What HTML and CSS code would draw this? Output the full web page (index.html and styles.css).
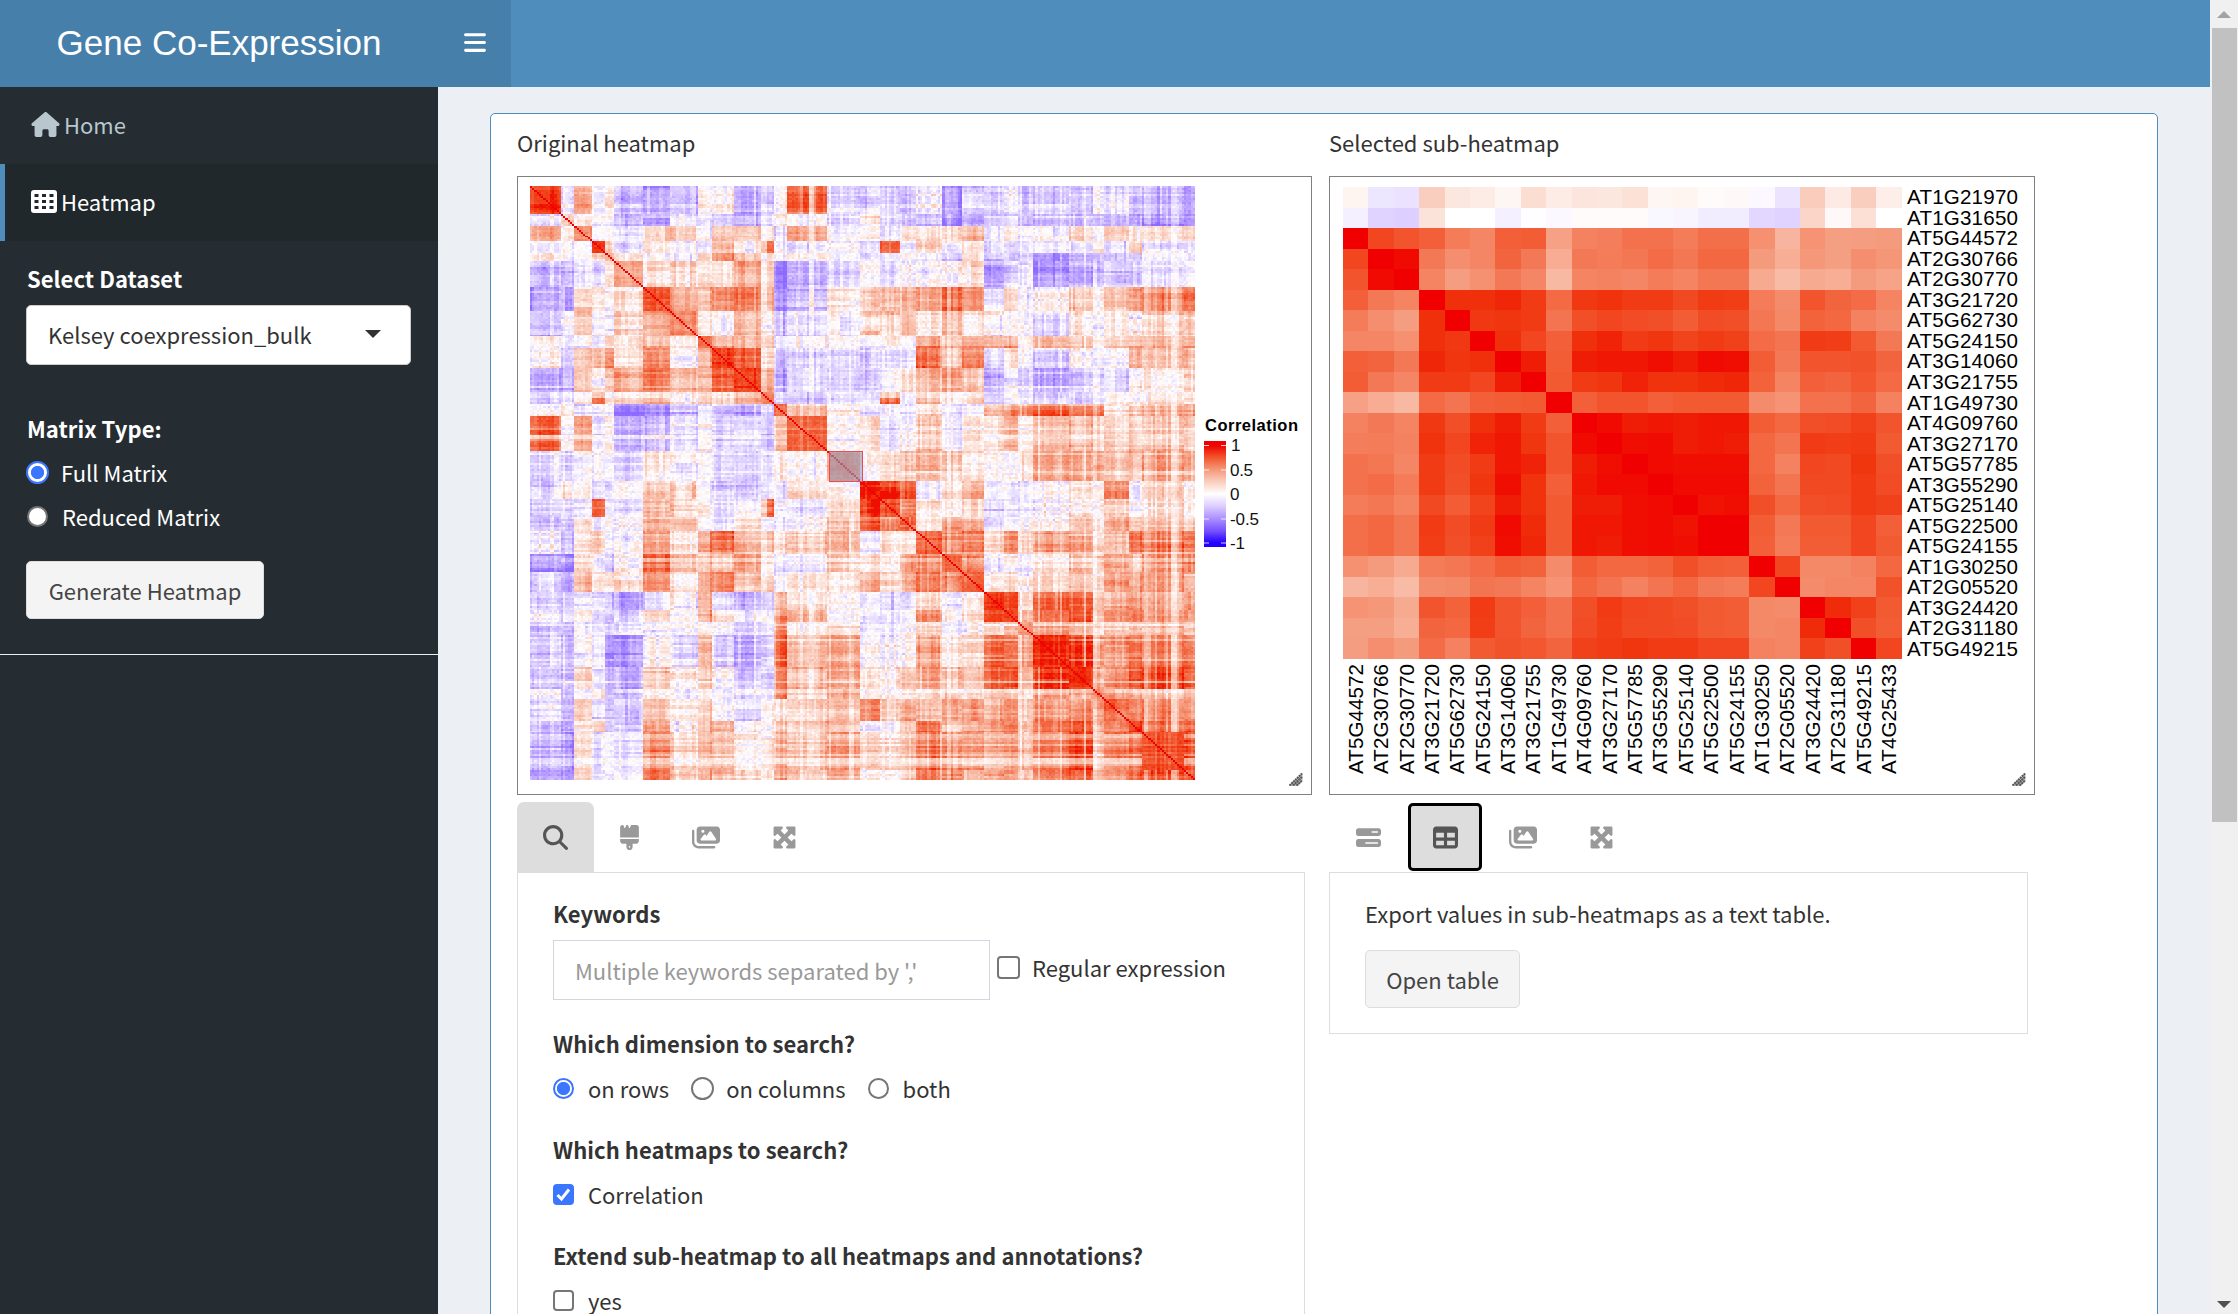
FILE: index.html
```html
<!DOCTYPE html>
<html lang="en">
<head>
<meta charset="utf-8">
<title>Gene Co-Expression</title>
<link rel="stylesheet" href="styles.css">
</head>
<body>
<svg class="sprite" aria-hidden="true">
  <symbol id="i-images" viewBox="0 0 576 512"><path d="M160 32c-35.300 0-64 28.700-64 64V320c0 35.300 28.700 64 64 64H512c35.300 0 64-28.700 64-64V96c0-35.300-28.700-64-64-64H160zM396 138.700l96 144c4.900 7.400 5.400 16.800 1.200 24.600S480.900 320 472 320H328 280 200c-9.200 0-17.600-5.300-21.600-13.600s-2.900-18.200 2.900-25.400l64-80c4.600-5.700 11.400-9 18.700-9s14.200 3.300 18.700 9l17.300 21.600 56-84C360.500 132 368 128 376 128s15.500 4 20 10.700zM192 128a32 32 0 1 1 64 0 32 32 0 1 1 -64 0zM48 120c0-13.300-10.700-24-24-24S0 106.700 0 120V344c0 75.100 60.900 136 136 136H456c13.300 0 24-10.700 24-24s-10.700-24-24-24H136c-48.600 0-88-39.400-88-88V120z"/></symbol>
  <symbol id="i-max" viewBox="0 0 512 512"><path d="M200 32H56C42.700 32 32 42.700 32 56V200c0 9.700 5.800 18.500 14.800 22.200s19.300 1.700 26.200-5.200l40-40 79 79-79 79L73 295c-6.900-6.900-17.200-8.900-26.200-5.200S32 302.300 32 312V456c0 13.300 10.700 24 24 24H200c9.700 0 18.500-5.800 22.200-14.800s1.700-19.300-5.200-26.200l-40-40 79-79 79 79-40 40c-6.900 6.900-8.900 17.200-5.200 26.200s12.500 14.800 22.200 14.800H456c13.300 0 24-10.700 24-24V312c0-9.700-5.800-18.500-14.800-22.200s-19.300-1.700-26.200 5.200l-40 40-79-79 79-79 40 40c6.900 6.900 17.200 8.900 26.200 5.200s14.800-12.500 14.800-22.200V56c0-13.300-10.700-24-24-24H312c-9.700 0-18.500 5.800-22.200 14.800s-1.700 19.300 5.200 26.200l40 40-79 79-79-79 40-40c6.900-6.900 8.900-17.200 5.200-26.200S209.700 32 200 32z"/></symbol>
  <symbol id="i-grip" viewBox="0 0 14 13"><path d="M0 13 13.500 0V8L9 13Z" fill="#b4b4b4"/><path d="M.5 12.500 13 .5M4 12.500 13 4M7.500 12.500 13 7.500" stroke="#555" stroke-width="2" stroke-dasharray="2 .6" fill="none"/></symbol>
</svg>

<div class="app">
  <div class="page">
    <header class="header">
      <div class="brand">Gene Co-Expression</div>
      <button class="toggle" aria-label="Toggle navigation"><svg viewBox="0 0 448 512"><path d="M0 96C0 78.300 14.300 64 32 64H416c17.700 0 32 14.300 32 32s-14.300 32-32 32H32C14.300 128 0 113.700 0 96zM0 256c0-17.700 14.300-32 32-32H416c17.700 0 32 14.300 32 32s-14.300 32-32 32H32c-17.700 0-32-14.300-32-32zM448 416c0 17.700-14.300 32-32 32H32c-17.700 0-32-14.300-32-32s14.300-32 32-32H416c17.700 0 32 14.300 32 32z"/></svg></button>
    </header>
    <div class="body">
      <aside class="sidebar">
        <a class="nav"><svg class="house" viewBox="0 0 576 512"><path d="M575.800 255.500c0 18-15 32.100-32 32.100h-32l.7 160.200c0 2.700-.2 5.400-.5 8.100V472c0 22.100-17.900 40-40 40H392c-22.100 0-40-17.900-40-40V384c0-17.700-14.300-32-32-32H256c-17.700 0-32 14.300-32 32v88c0 22.100-17.900 40-40 40H104c-22.100 0-40-17.900-40-40V287.600H32c-18 0-32-14-32-32.100c0-9 3-17 10-24L266.400 8c7-7 15-8 22-8s15 2 21 7L564.800 231.500c8 7 12 15 11 24z"/></svg><span>Home</span></a>
        <a class="nav active"><svg class="cells" viewBox="0 0 26 23"><path fill-rule="evenodd" d="M3 0H23a3 3 0 0 1 3 3V20a3 3 0 0 1-3 3H3a3 3 0 0 1-3-3V3a3 3 0 0 1 3-3ZM3.500 4V7H7.500V4ZM11 4V7H15V4ZM18.500 4V7H22.500V4ZM3.500 10V13H7.500V10ZM11 10V13H15V10ZM18.500 10V13H22.500V10ZM3.500 16V19H7.500V16ZM11 16V19H15V16ZM18.500 16V19H22.500V16Z"/></svg><span>Heatmap</span></a>
        <form class="side-form">
          <div class="strong">Select Dataset</div>
          <div class="select"><span>Kelsey coexpression_bulk</span><i class="caret"></i></div>
          <div class="strong matrix">Matrix Type:</div>
          <label class="opt"><i class="radio big on"></i>Full Matrix</label>
          <label class="opt"><i class="radio"></i>Reduced Matrix</label>
          <button type="button" class="btn generate">Generate Heatmap</button>
        </form>
        <hr class="rule">
      </aside>
      <main class="content">
        <div class="card">
          <section class="col-a">
            <div class="title">Original heatmap</div>
            <div class="plot plot-a">
              <canvas id="full" width="665" height="594"></canvas>
              <div class="brush"></div>
              <svg class="legend" width="110" height="140" viewBox="1200 420 110 140">
                <defs><linearGradient id="scale" x1="0" y1="0" x2="0" y2="1">
                  <stop offset="0" stop-color="#f00000"/><stop offset=".04" stop-color="#f00000"/><stop offset=".15" stop-color="#f25229"/><stop offset=".27" stop-color="#f5997b"/><stop offset=".39" stop-color="#fad0c1"/><stop offset=".5" stop-color="#fff"/><stop offset=".62" stop-color="#dacbff"/><stop offset=".73" stop-color="#ad90ff"/><stop offset=".85" stop-color="#7650ff"/><stop offset=".96" stop-color="#2200ff"/><stop offset="1" stop-color="#2200ff"/>
                </linearGradient></defs>
                <text class="legend-title" x="1205" y="431" textLength="93">Correlation</text>
                <rect x="1204" y="441" width="22" height="106" fill="url(#scale)"/>
                <path d="M1204 445.500h5m12 0h5M1204 470h5m12 0h5M1204 494.500h5m12 0h5M1204 519h5m12 0h5M1204 543h5m12 0h5" stroke="#fff" stroke-opacity=".8"/>
                <text x="1231" y="451">1</text><text x="1230" y="476" textLength="23">0.5</text><text x="1230" y="500">0</text><text x="1230" y="525" textLength="29">-0.5</text><text x="1230" y="549" textLength="15">-1</text>
              </svg>
              <svg class="grip"><use href="#i-grip"/></svg>
            </div>
            <nav class="tabs">
              <a class="tab t77 on"><svg width="25" height="25" viewBox="0 0 512 512"><path d="M416 208c0 45.900-14.900 88.300-40 122.700L502.600 457.400c12.500 12.500 12.500 32.800 0 45.300s-32.800 12.500-45.300 0L330.700 376c-34.400 25.200-76.800 40-122.700 40C93.100 416 0 322.900 0 208S93.100 0 208 0S416 93.100 416 208zM208 352a144 144 0 1 0 0-288 144 144 0 1 0 0 288z"/></svg></a>
              <a class="tab t71"><svg width="19" height="25" viewBox="0 0 384 512"><path d="M162.400 6c-1.500-3.600-5-6-8.900-6h-19c-3.900 0-7.500 2.400-8.900 6L104.900 57.700c-3.200 8-14.600 8-17.800 0L66.400 6c-1.500-3.600-5-6-8.900-6H48C21.500 0 0 21.500 0 48V256H384V48c0-26.500-21.500-48-48-48H230.500c-3.900 0-7.500 2.400-8.900 6L200.900 57.700c-3.200 8-14.600 8-17.800 0L162.400 6zM0 288v32c0 35.300 28.700 64 64 64h64v64c0 35.300 28.700 64 64 64s64-28.700 64-64V384h64c35.300 0 64-28.700 64-64V288H0zM192 432a16 16 0 1 1 0 32 16 16 0 1 1 0-32z"/></svg></a>
              <a class="tab t81"><svg width="28" height="25"><use href="#i-images"/></svg></a>
              <a class="tab t76"><svg width="25" height="25"><use href="#i-max"/></svg></a>
            </nav>
            <div class="panel panel-a">
              <div class="strong">Keywords</div>
              <div class="line search">
                <input class="field" placeholder="Multiple keywords separated by ','">
                <label class="check-label"><i class="check big"></i>Regular expression</label>
              </div>
              <div class="strong q1">Which dimension to search?</div>
              <div class="line radios">
                <label><i class="radio light on"></i>on rows</label>
                <label><i class="radio light wide"></i>on columns</label>
                <label><i class="radio light"></i>both</label>
              </div>
              <div class="strong q2">Which heatmaps to search?</div>
              <div class="line"><label><i class="check on"><svg viewBox="0 0 21 21"><path d="M4.500 11 8.500 15 16 5.500" fill="none" stroke="#fff" stroke-width="3"/></svg></i>Correlation</label></div>
              <div class="strong q2">Extend sub-heatmap to all heatmaps and annotations?</div>
              <div class="line"><label><i class="check"></i>yes</label></div>
            </div>
          </section>
          <section class="col-b">
            <div class="title">Selected sub-heatmap</div>
            <div class="plot plot-b">
              <svg id="sub" width="704" height="617" viewBox="1330 177 704 617"></svg>
              <svg class="grip"><use href="#i-grip"/></svg>
            </div>
            <nav class="tabs">
              <a class="tab t78"><svg width="25" height="25" viewBox="0 0 512 512"><path d="M448 160H320V128H448v32zM48 64C21.500 64 0 85.500 0 112v64c0 26.500 21.500 48 48 48H464c26.500 0 48-21.500 48-48V112c0-26.500-21.500-48-48-48H48zM448 352v32H192V352H448zM48 288c-26.500 0-48 21.500-48 48v64c0 26.500 21.500 48 48 48H464c26.500 0 48-21.500 48-48V336c0-26.500-21.500-48-48-48H48z"/></svg></a>
              <a class="tab t76 on focus"><svg width="25" height="25" viewBox="0 0 512 512"><path d="M64 256V160H224v96H64zm0 64H224v96H64V320zm224 96V320H448v96H288zM448 256H288V160H448v96zM64 32C28.700 32 0 60.700 0 96V416c0 35.300 28.700 64 64 64H448c35.300 0 64-28.700 64-64V96c0-35.300-28.700-64-64-64H64z"/></svg></a>
              <a class="tab t80"><svg width="28" height="25"><use href="#i-images"/></svg></a>
              <a class="tab t76"><svg width="25" height="25"><use href="#i-max"/></svg></a>
            </nav>
            <div class="panel panel-b">
              <div>Export values in sub-heatmaps as a text table.</div>
              <button type="button" class="btn open">Open table</button>
            </div>
          </section>
        </div>
      </main>
    </div>
  </div>
  <div class="scrollbar"><i class="up"></i><div class="thumb"></div><i class="down"></i></div>
</div>
<script src="heatmaps.js"></script>
</body>
</html>
```
FILE: styles.css
```css
* { box-sizing: border-box; }
html, body { height: 100%; overflow: hidden; }
body {
  margin: 0;
  font: 22px/35px "Noto Sans CJK JP", "Noto Sans CJK SC", sans-serif;
  color: #333;
}
button, input { font: inherit; }
.sprite { position: absolute; width: 0; height: 0; }
.app { display: flex; height: 1314px; }
.page { flex: 1; display: flex; flex-direction: column; min-width: 0; }

.header { display: flex; height: 87px; background: #4f8dbc; flex: none; }
.brand {
  width: 438px; background: #477fab; color: #fff; text-align: center;
  font: 35px/86px "Liberation Sans", Arial, sans-serif;
}
.toggle { width: 73px; padding: 0 0 2px; border: 0; background: #477fab; display: flex; align-items: center; justify-content: center; }
.toggle svg { width: 22px; height: 25px; fill: #fff; }

.body { flex: 1; display: flex; min-height: 0; }
.sidebar { width: 438px; flex: none; background: #252d32; color: #fff; }
.nav { display: flex; align-items: center; height: 77px; padding: 0 0 2px 31px; color: #b8c7ce; }
.nav svg { fill: currentColor; margin-right: 4px; }
.nav .house { width: 29px; height: 25px; margin-top: -1px; }
.nav .cells { width: 26px; height: 23px; }
.nav.active { background: #20282b; color: #fff; border-left: 5px solid #4f8dbc; padding-left: 26px; }
.side-form { padding: 20px 26px 0; }
.strong { font-weight: 700; letter-spacing: .05px; }
.side-form .strong { line-height: 35px; padding-left: 1px; }
.select {
  display: flex; align-items: center; justify-content: space-between;
  width: 385px; height: 60px; margin-top: 9px; padding: 0 29px 1px 21px;
  background: #fff; border: 1px solid #ccc; border-radius: 5px; color: #333;
}
.caret { border: 8px solid transparent; border-top: 8px solid #333; border-bottom: 0; margin-top: -2px; }
.matrix { margin-top: 46px; }
.opt { display: flex; align-items: center; height: 35px; margin-top: 9px; }
.radio { width: 21px; height: 21px; border-radius: 50%; background: #fff; border: 2px solid #767676; margin-right: 12px; flex: none; }
.opt .radio { margin: 0 14px 0 1px; }
.opt .radio.big { width: 23px; height: 23px; margin: 0 12px 0 0; }
.radio.on { border-color: #3b76ff; background: radial-gradient(circle, #3b76ff 0 6.200px, #fff 7px); }
.btn { display: block; height: 58px; padding: 0; background: #f4f4f4; border: 1px solid #ddd; border-radius: 5px; color: #444; }
.generate { width: 238px; margin-top: 27px; }
.rule { height: 1px; border: 0; margin: 35px 0 0; background: #eee; }

.content { flex: 1; background: #ecf0f5; padding: 26px 52px 0 52px; min-width: 0; overflow: hidden; }
.card {
  display: flex; gap: 17px; height: 1300px; padding: 11px 26px 0;
  background: #fff; border: 1px solid #4f8dbc; border-radius: 5px;
}
.title { height: 35px; margin-bottom: 16px; }
.plot { position: relative; height: 619px; border: 1px solid #808080; }
.plot-a { width: 795px; }
.plot-b { width: 706px; }
#full { display: block; margin: 9px 0 0 12px; }
#sub { display: block; }
.brush { position: absolute; left: 311px; top: 274px; width: 34px; height: 31px; background: rgba(150, 155, 185, .6); border: 1px solid #ee4a50; }
.legend { position: absolute; left: 682px; top: 243px; overflow: visible; }
.grip { position: absolute; right: 8px; bottom: 8px; width: 14px; height: 13px; }
.legend text, #sub text { font-family: "Liberation Sans", Arial, sans-serif; font-size: 17px; fill: #111; }
.legend .legend-title { font-weight: 700; font-size: 16.500px; fill: #000; }
#sub text { font-size: 20.600px; fill: #000; }

.tabs { display: flex; height: 70px; margin-top: 7px; }
.tab { display: flex; align-items: center; justify-content: center; color: #999; }
.tab svg { fill: currentColor; }
.tab.on { background: #ddd; color: #555; border-radius: 7px 7px 0 0; }
.t71 { width: 71px; } .t76 { width: 76px; } .t77 { width: 77px; } .t78 { width: 78px; } .t80 { width: 80px; } .t81 { width: 81px; }
.tab.focus { width: 70px; margin: 3px; border-radius: 3px; outline: 3px solid #000; outline-offset: -1px; }
.panel { border: 1px solid #ddd; padding: 23px 35px 0; }
.panel-a { width: 788px; height: 480px; }
.panel-b { width: 699px; height: 162px; }
.open { width: 155px; margin-top: 19px; }
.line, .line label { display: flex; align-items: center; }
.line { height: 35px; }
.search { height: 60px; margin-top: 9px; }
.field { width: 437px; height: 60px; padding: 0 21px; border: 1px solid #d2d6de; background: #fff; color: #333; }
.field::placeholder { color: #999; opacity: 1; }
.check-label { margin: -6px 0 0 7px; }
.check { width: 21px; height: 21px; margin-right: 14px; flex: none; border: 2px solid #767676; border-radius: 4px; background: #fff; }
.check.big { width: 23px; height: 23px; margin-right: 12px; }
.check.on { border: 0; background: #3b76ff; }
.check svg { display: block; }
.q1 { margin-top: 26px; }
.q1 + .line, .q2 + .line { margin-top: 10px; }
.q2 { margin-top: 26px; }
.radios { gap: 22px; }
.light { margin-right: 14px; }
.light.wide { width: 23px; height: 23px; margin-right: 12px; }

.scrollbar { width: 28px; flex: none; background: #f0f0f0; display: flex; flex-direction: column; align-items: center; }
.thumb { width: 25px; height: 794px; background: #c1c1c1; }
.up { border: 7px solid transparent; border-top: 0; border-bottom: 7px solid #a3a3a3; margin: 11px 0 10px; }
.down { border: 7px solid transparent; border-bottom: 0; border-top: 7px solid #505050; margin-top: auto; margin-bottom: 6px; }
```
FILE: heatmaps.js
```js
// Diverging colour scale: -1 blue, 0 white, 1 red.
const stops = [
  [-1, 34, 0, 255], [-.75, 118, 80, 255], [-.5, 173, 144, 255], [-.25, 218, 203, 255], [0, 255, 255, 255],
  [.25, 250, 208, 193], [.5, 245, 155, 125], [.75, 242, 90, 50], [.9, 240, 48, 10], [1, 240, 0, 0]
];
function colour(v) {
  v = Math.max(-1, Math.min(1, v));
  let k = 1;
  while (k < stops.length - 1 && v > stops[k][0]) k++;
  const a = stops[k - 1], b = stops[k], t = (v - a[0]) / (b[0] - a[0]);
  return 'rgb(' + [1, 2, 3].map(c => Math.round(a[c] + (b[c] - a[c]) * t)).join(',') + ')';
}

// Full matrix: gene clusters (edges in plot pixels) and mean correlation between clusters, in tenths.
const edges = [0, 30, 45, 61, 75, 85, 113, 140, 168, 181, 203, 231, 243, 257, 298, 331, 350, 370, 385, 412, 432, 454, 474, 487, 504, 538, 563, 575, 598, 612, 653, 665];
const upper = [
  [8.5,-1,4.5,-1,1,-2.5,-4.5,-2.5,-2,.5,-3.5,-2.5,.5,7,-1.5,-1,-2,-3,-1,-4,-1,-1.5,-1,-2.5,-2.5,-2.5,0,-1.5,-2,-3.5,-4.5],
  [2,1,-1,-1,-3,-4.5,-1.5,-2,-2.5,-3.5,-2,2,0,-1,1,-1,-2,-3.5,-5,-3,-2,-2,-3,-3,-3,-2.5,-3.5,-3.5,-4.5,-4.5],
  [6,-1,1,0,2,3,-1,3,3,1,-1,4.5,.5,1,0,2,2,3,4,-1,1,0,0,2,0,2,1,3,2],
  [8.5,1,-1.5,1,-1,-1,3,0,6.5,-1,-1,-1.5,-1.5,7,-1.5,2,-1,1,-1.5,-1,-1,-1.5,-1.5,1,-1.5,2,-1.5,-1.5],
  [3,1,-1,-2,1,4,3,1,-1,0,-1,-2,-1,-1,-2,-3,0,-3,-2,-3,-5,-4,-3,-3,-2,-2,-2],
  [4.5,1.5,2,1,2,4,2,-5.5,-3.5,-1.5,0,-1.5,0,0,1,1,-3.5,-2,-1,-4.5,-3.5,-3,-2.5,-2.5,-1.5,0],
  [7,4.5,4.5,5.5,6,3.5,-5.5,-3.5,1,2,3,3.5,4.5,7.5,5,-1,2,-1,0,3,0,3,4,5.5,6],
  [5.5,2,0,4,1,-3.5,-1.5,0,2,2,3,0,4,1,0,-1,0,-2,1,-1,1,0,2,3],
  [5,4.5,4,2,-1,0,-1,-1,0,-1,6,4,5.5,5,5,0,4,4,0,3,5.5,5,6],
  [8.3,7,2,-3.5,-1.5,-1.5,-1.5,-1.5,-1,6,3,5.5,-1.5,1,-1,-2.5,0,-1,0,4,3,3.5],
  [7.8,4,-4.5,-1.5,-2.5,-2.5,0,1,3.5,5.5,3,-3.5,-1,-2,-4.5,-2.5,-2,-2.5,0,1,2],
  [6.5,-2.5,-2.5,-1,-1,6,-1,3,1,2,-2,-1,-1,-2,-2,-1,0,1,1,1],
  [7,3.5,2,-1,-1,-1.5,1,-1,0,4,5,6,7.3,6,6,2,3,4.5,4],
  [7.2,1,1,-1,0,2,-1,1,2.5,3.5,1,3,3,2,2,2,3,2],
  [5.5,.5,2,3,3.5,4,2,.5,1,2,5,4.5,4.5,4,3.5,5.5,4],
  [9.6,8,7,-.5,2,4,-1,-1,-1,0,1,1,5.5,0,2,1],
  [8,5.5,1,1,2,-1.5,-1,-1,0,1,1,2,0,2,1],
  [7,1,5,4,-1,-1,0,1,3,2,4.5,3,4,3],
  [7,5,6,2,5,2,4,4,2,3,6.5,6,6],
  [7.2,5,0,0,0,1,3,2,5,3,6,6],
  [6.5,1,1,0,2,3,1,4,4,5,4],
  [9.4,8,3,7,7,3.5,4.5,5,5,5],
  [8,3.5,6,7,3.5,5,6,5,5],
  [5.5,4.5,4,2,3,3,3,3.5],
  [8.2,8,4.5,5,6,6.5,6],
  [8.3,4.5,5,7,7.8,6.8],
  [6,4.5,3.5,3.5,4.5],
  [6.5,6,6,5.5],
  [7.5,7,6.5],
  [8,7.8],
  [7.8]
];
let seed = 20231;
function rnd() {
  seed = (seed * 1664525 + 1013904223) % 4294967296;
  return seed / 4294967296;
}
const spread = () => rnd() + rnd() + rnd() - 1.5;
const genes = 300, W = 665, H = 594;
const group = [], lift = [], weight = [], noise = [];
let run = null;
for (let i = 0; i < genes; i++) {
  const x = (i + .5) / genes * W;
  group[i] = edges.findIndex(e => e > x) - 1;
  // Neighbouring genes behave alike, so a profile often carries over to the next gene.
  if (!run || group[i] !== group[i - 1] || rnd() < .6) {
    const tilt = spread() * .08;
    run = { w: rnd() < .12 ? .35 + rnd() * .4 : .9 + rnd() * .2, l: upper.map(() => spread() * .13 + tilt) };
  }
  weight[i] = run.w;
  lift[i] = run.l.map(l => l + spread() * .06);
}
const ctx = document.getElementById('full').getContext('2d');
for (let i = 0; i < genes; i++) {
  noise[i] = [];
  for (let j = 0; j < genes; j++) {
    let v = 1;
    if (i !== j) {
      const g = Math.min(group[i], group[j]), h = Math.max(group[i], group[j]);
      const n = j < i ? noise[j][i] : (noise[i][j] = spread() * .09);
      const base = upper[g][h - g] / 10;
      const calm = 1 - Math.abs(base) * .5;
      const strength = g === h ? 1 : weight[i] * weight[j];
      v = base * strength + (lift[i][group[j]] + lift[j][group[i]] + n) * calm;
      v = Math.max(-.65, Math.min(.97, v));
    }
    ctx.fillStyle = colour(v);
    const x0 = Math.round(j * W / genes), x1 = Math.round((j + 1) * W / genes);
    const y0 = Math.round(i * H / genes), y1 = Math.round((i + 1) * H / genes);
    ctx.fillRect(x0, y0, x1 - x0, y1 - y0);
  }
}

// Sub-heatmap: two extra rows, then the upper triangle (in hundredths).
const cols = ['AT5G44572','AT2G30766','AT2G30770','AT3G21720','AT5G62730','AT5G24150','AT3G14060','AT3G21755','AT1G49730','AT4G09760','AT3G27170','AT5G57785','AT3G55290','AT5G25140','AT5G22500','AT5G24155','AT1G30250','AT2G05520','AT3G24420','AT2G31180','AT5G49215','AT4G25433'];
const rows = ['AT1G21970', 'AT1G31650'].concat(cols.slice(0, 21));
const head = [
  [6,-12,-14,26,13,10,5,18,10,14,13,16,5,6,2,3,-3,-13,27,11,26,9],
  [-7,-21,-23,15,0,0,-7,-1,-3,2,2,2,-4,-5,-9,-9,-19,-21,22,3,17,0]
];
const tri = [
  [100,82,77,73,62,58,73,74,47,60,61,66,66,62,67,67,54,38,53,48,49,50],
  [100,98,63,55,58,71,63,42,63,62,64,68,64,70,70,50,41,51,48,55,52],
  [100,59,49,54,63,58,36,59,60,58,62,59,64,64,43,35,43,41,50,46],
  [100,90,90,92,86,69,87,89,86,86,81,86,85,62,56,77,71,68,59],
  [100,87,88,86,65,79,82,80,79,74,80,79,64,57,72,70,60,56],
  [100,90,82,73,90,93,86,88,83,86,84,68,65,86,85,75,63],
  [100,94,74,94,95,95,97,94,98,97,74,63,77,77,78,71],
  [100,75,86,88,93,89,89,91,92,72,59,73,71,76,69],
  [100,73,77,77,73,75,75,75,56,53,66,66,71,60],
  [100,98,94,95,94,95,95,74,70,79,80,84,77],
  [100,97,98,94,95,94,70,65,86,85,86,75],
  [100,98,97,97,97,70,60,82,81,88,79],
  [100,98,98,98,72,65,81,81,86,80],
  [100,96,97,79,70,79,80,86,84],
  [100,100,74,63,75,75,82,73],
  [100,73,62,74,74,82,75],
  [100,82,57,57,60,70],
  [100,56,58,58,78],
  [100,91,84,75],
  [100,79,74],
  [100,82]
];
const left = 1343, top0 = 187, cw = 558.6 / 22, rh = 472 / 23;
let out = '<g shape-rendering="crispEdges">';
rows.forEach((_, r) => cols.forEach((_, c) => {
  const k = r - 2;
  const v = r < 2 ? head[r][c] : tri[Math.min(k, c)][Math.abs(k - c)];
  const x0 = Math.round(left + c * cw), x1 = Math.round(left + (c + 1) * cw);
  const y0 = Math.round(top0 + r * rh), y1 = Math.round(top0 + (r + 1) * rh);
  out += `<rect x="${x0}" y="${y0}" width="${x1 - x0}" height="${y1 - y0}" fill="${colour(v / 100)}"/>`;
}));
out += '</g>';
rows.forEach((name, r) => {
  out += `<text x="1907" y="${(top0 + (r + .5) * rh + 7).toFixed(1)}" textLength="111">${name}</text>`;
});
cols.forEach((name, c) => {
  out += `<text transform="translate(${(left + (c + .5) * cw + 7).toFixed(1)} 774) rotate(-90)" textLength="110">${name}</text>`;
});
document.getElementById('sub').innerHTML = out;
```
